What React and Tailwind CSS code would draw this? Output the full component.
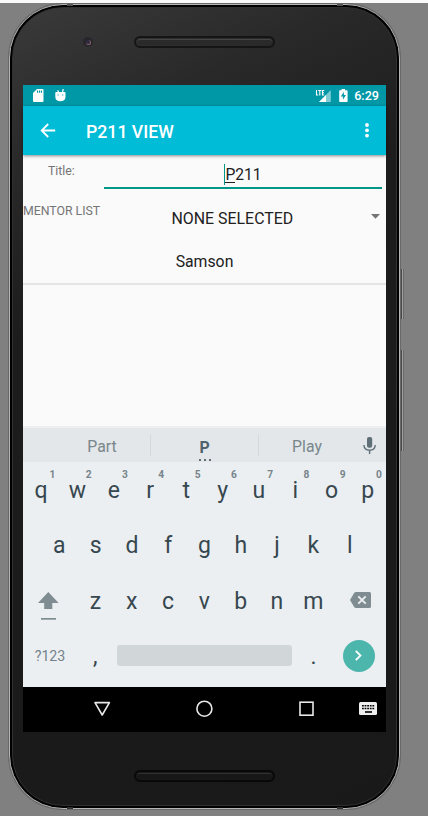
import React from "react";

const TOP_ROW = [
  ["q", "1"], ["w", "2"], ["e", "3"], ["r", "4"], ["t", "5"],
  ["y", "6"], ["u", "7"], ["i", "8"], ["o", "9"], ["p", "0"],
];

function Slot({ className = "" }) {
  return (
    <div className={"h-3 w-[141px] rounded-full border-2 p-px " + className}>
      <div className="h-full rounded-full border-t border-[#454545] bg-[#2a2a2a]" />
    </div>
  );
}

function StatusBar() {
  return (
    <div className="flex h-[21px] items-center bg-[#0097a7] text-white">
      <svg className="ml-[10px] h-[13px] w-[11px]" viewBox="0 0 11 13">
        <path fill="#fff" d="M4 0h5.500q1 0 1 1v11q0 1-1 1h-8.500q-1 0-1-1V4z" />
        <path fill="#0097a7" d="M4 1.500h1.200v2.200H4zM6 1.500h1.200v2.200H6zM8 1.500h1v2.200H8z" />
      </svg>
      <svg className="mb-px ml-[11px] h-[13px] w-[11px]" viewBox="0 0 11 13">
        <path d="M2.600 1.200l1 2M8.300 0L7.500 3" stroke="#fff" strokeWidth="1.200" />
        <path fill="#fff" d="M.3 3.800q0-.8.900-.8h8.400q.9 0 .9.800v3.700q0 4.800-5.100 4.800T.3 7.500z" />
        <path fill="#0097a7" d="M2.500 5.500h1.100v1.100H2.500zM7.200 5.500h1.100v1.100H7.200z" />
      </svg>
      <div className="ml-auto flex items-center">
        <svg className="h-[14px] w-4" viewBox="0 0 16 14">
          <path fill="#7fcbd3" d="M15.800 1v12H4z" />
          <path fill="#0097a7" d="M3 0h6.800v7H3z" />
          <path fill="#fff" d="M11 6v7H4z" />
          <path stroke="#fff" strokeWidth="1.100" fill="none" d="M1.500 1v5h1.800M3.300 1.500h3M4.800 1.500V6.500M9.200 1.500H7.500V6h1.700M7.500 3.700h1.500" />
        </svg>
        <svg className="ml-[8px] h-[13px] w-[9px]" viewBox="0 0 9 13">
          <path fill="#fff" d="M2.500 0h3.500v1.200h2q.6 0 .6.700v10.400q0 .7-.6.700H.8q-.6 0-.6-.7V1.900q0-.7.6-.7h1.700z" />
          <path fill="#0097a7" d="M4.800 2.800L1.900 7.500h2v3.300L6.900 6h-2z" />
        </svg>
        <span className="ml-[6px] mr-[7px] text-[12.600px] font-medium leading-[21px]">6:29</span>
      </div>
    </div>
  );
}

function AppBar() {
  return (
    <div className="relative flex h-[49px] items-center bg-[#00bcd7] text-white shadow-[0_1px_3px_rgba(0,0,0,0.45)]">
      <svg className="ml-[17px] h-4 w-4" viewBox="0 0 16 16" fill="none" stroke="#fff" strokeWidth="1.800">
        <path d="M15.200 7.500H1.500M8.200 1L1.700 7.500l6.500 6.500" />
      </svg>
      <h1 className="ml-[30px] pt-0.5 text-[17.700px] font-medium leading-6">P211 VIEW</h1>
      <svg className="ml-auto mr-[17.500px] h-[15px] w-1" viewBox="0 0 4 15" fill="#fff">
        <circle cx="2" cy="2" r="1.900" />
        <circle cx="2" cy="7.300" r="1.900" />
        <circle cx="2" cy="12.600" r="1.900" />
      </svg>
    </div>
  );
}

function Form() {
  return (
    <div className="h-[271px] bg-[#fafafa] text-[#212121]">
      <div className="flex h-[34px]">
        <div className="w-[80.500px] pl-[25px] pt-2 text-[12.300px] leading-4 text-[#757575]">Title:</div>
        <div className="flex h-[34px] w-[278.500px] justify-center border-b-2 border-[#009688]">
          <div className="mt-[9px] flex h-[21px] pl-[0.500px] text-[15.600px] leading-[23px]">
            <div className="h-full w-px bg-[#009688]" />
            <span className="h-[19px] border-b border-[#212121]">P</span>
            <span>211</span>
          </div>
        </div>
      </div>
      <div className="flex h-[51px]">
        <div className="w-[80.500px] whitespace-nowrap pt-[14px] text-[12.300px] leading-4 text-[#757575]">MENTOR LIST</div>
        <div className="flex-1 pl-[68px] pt-[18px] text-[15.900px] leading-6">NONE SELECTED</div>
        <svg className="mr-[6px] mt-[25px] h-[5px] w-[9px]" viewBox="0 0 9 5">
          <path fill="#757575" d="M0 0h9L4.500 4.700z" />
        </svg>
      </div>
      <div className="h-[45px] border-b-2 border-[#e4e4e4] pt-[10px] text-center text-[15.800px] leading-6">Samson</div>
    </div>
  );
}

function Suggestions() {
  return (
    <div className="flex h-9 items-center border-t-2 border-[#edeff0] bg-[#e3e7e9] text-[15.800px] leading-6 text-[#79868b]">
      <div className="w-[127px] pl-[31px] pt-[3px] text-center">Part</div>
      <div className="h-[21px] w-px bg-[#d4d9db]" />
      <div className="flex w-[107px] flex-col items-center pt-[6px] font-bold text-[#4f626b]">
        <span className="h-5 leading-6">P</span>
        <span className="flex gap-[3px] pt-[3px]">
          <i className="size-[2px] rounded-full bg-[#37474f]" />
          <i className="size-[2px] rounded-full bg-[#37474f]" />
          <i className="size-[2px] rounded-full bg-[#37474f]" />
        </span>
      </div>
      <div className="h-[21px] w-px bg-[#d4d9db]" />
      <div className="w-[96px] pt-[3px] text-center">Play</div>
      <svg className="ml-[8px] h-[17px] w-[13px]" viewBox="0 0 13 17">
        <rect x="4" y="0" width="5.200" height="10.800" rx="2" fill="#5f6f77" />
        <path d="M.9 8q.4 5.200 5.700 5.200T12.200 8M6.600 13v4" fill="none" stroke="#5f6f77" strokeWidth="1.400" />
      </svg>
    </div>
  );
}

function Key({ letter }) {
  return <div className="w-[36.300px] text-center">{letter}</div>;
}

function Keyboard() {
  return (
    <div className="h-[225px] bg-[#ebeff2] text-[23px] leading-[55px] text-[#37474f]">
      <div className="flex h-[56px] pt-px">
        {TOP_ROW.map(([letter, digit]) => (
          <div key={letter} className="relative w-[36.300px] text-center">
            {letter}
            <span className="absolute right-[4px] top-[6px] text-[10.200px] font-bold leading-3 text-[#77848a]">{digit}</span>
          </div>
        ))}
      </div>
      <div className="flex h-[55px] justify-center">
        {"asdfghjkl".split("").map((letter) => <Key key={letter} letter={letter} />)}
      </div>
      <div className="flex h-[55px] pt-px">
        <svg className="ml-[15px] mr-[18.300px] mt-[18px] h-[29px] w-[21px]" viewBox="0 0 21 29" fill="#7f8c91">
          <path d="M10.300 0L20.600 11h-6.300v6H6.200v-6H0z" />
          <path d="M3 26h15v1.700H3z" />
        </svg>
        {"zxcvbnm".split("").map((letter) => <Key key={letter} letter={letter} />)}
        <svg className="ml-[18.200px] mt-[18px] h-4 w-[21px]" viewBox="0 0 21 16">
          <path fill="#7f8c91" d="M6 0h13.500q1.500 0 1.500 1.500v13q0 1.500-1.500 1.500H6Q4.800 16 4 14.700L0 8l4-6.700Q4.800 0 6 0z" />
          <path stroke="#ebeff2" strokeWidth="1.900" d="M8.300 4.300l7.400 7.400M15.700 4.300l-7.400 7.400" />
        </svg>
      </div>
      <div className="flex h-[55px] items-center">
        <div className="w-[54px] pt-0.5 text-center text-[14.200px] text-[#74828a]">?123</div>
        <div className="w-[36.300px] pt-0.5 text-center">,</div>
        <div className="ml-[4px] h-[21px] w-[175px] rounded-[3px] bg-[#d1d6d9]" />
        <div className="ml-[3px] w-[36.300px] pt-0.5 text-center">.</div>
        <div className="ml-[11.300px] flex size-8 items-center justify-center rounded-full bg-[#4db6ac]">
          <svg className="h-[11px] w-[7px]" viewBox="0 0 7 11" fill="none" stroke="#fff" strokeWidth="1.800">
            <path d="M.8.800l4.700 4.700-4.700 4.700" />
          </svg>
        </div>
      </div>
    </div>
  );
}

function NavBar() {
  return (
    <div className="h-[45px] bg-black">
      <svg className="block h-[45px] w-[363px]" viewBox="0 0 363 45" fill="none" stroke="#e8e8e8" strokeWidth="1.600">
        <path strokeLinejoin="round" d="M72 15.600h14.400L79.200 28z" />
        <circle cx="181.400" cy="21.700" r="7.500" />
        <rect x="277" y="15.200" width="13" height="13" />
        <rect x="336" y="15" width="18" height="13" rx="1.500" fill="#eee" stroke="none" />
        <path stroke="#000" strokeWidth="1.500" strokeDasharray="1.800 .8" d="M339 18.700h12.400M339 21.600h12.400" />
        <path stroke="#000" strokeWidth="1.600" d="M342 25h7" />
      </svg>
    </div>
  );
}

export default function App() {
  return (
    <div className="relative h-[816px] w-[428px] overflow-hidden border-t-[3px] border-[#fafafa] bg-[#808080] pl-[9px] pt-px font-[Roboto,sans-serif]">
      <div className="absolute left-[401px] top-[266px] h-[50px] w-[3px] border-l border-r border-l-[#484848] border-r-[#6a6a6a] bg-[#a0a0a0]" />
      <div className="absolute left-[401px] top-[347px] h-[101px] w-[3px] border-l border-r border-l-[#484848] border-r-[#6a6a6a] bg-[#a0a0a0]" />
      <div className="relative h-[805px] w-[391px] rounded-[54px] border border-[#b5b5b5] bg-black p-[2px] shadow-[0_0_0_1px_#686868]">
        <div className="h-full rounded-[51px] border border-[#303030] bg-[linear-gradient(155deg,#3a3a3a_0%,#292929_16%,#1c1c1c_34%,#191919_100%)] px-[10px]">
          <div className="flex h-[77px] pt-7">
            <div className="ml-[59px] flex size-3 items-center justify-center rounded-full border border-[#353535] bg-[#28262b]">
              <div className="size-[5px] rounded-full border-b border-r border-[#806067] bg-[#302b45]" />
            </div>
            <Slot className="ml-[40px] border-[#151515]" />
          </div>
          <main className="w-[363px]">
            <StatusBar />
            <AppBar />
            <Form />
            <Suggestions />
            <Keyboard />
            <NavBar />
          </main>
          <div className="pl-[111px] pt-[38px]">
            <div className="h-3 w-[141px] rounded-full border-2 border-[#080808] p-px">
              <div className="h-full rounded-full border-t border-[#303030] bg-[#171717]" />
            </div>
          </div>
        </div>
      </div>
      <div className="absolute left-[67px] top-px h-[2px] w-[6px] bg-[#555]" />
      <div className="absolute left-[337px] top-px h-[2px] w-[6px] bg-[#555]" />
      <div className="absolute left-[67px] top-[804px] h-[2px] w-[6px] bg-[#333]" />
      <div className="absolute left-[337px] top-[804px] h-[2px] w-[6px] bg-[#333]" />
    </div>
  );
}
